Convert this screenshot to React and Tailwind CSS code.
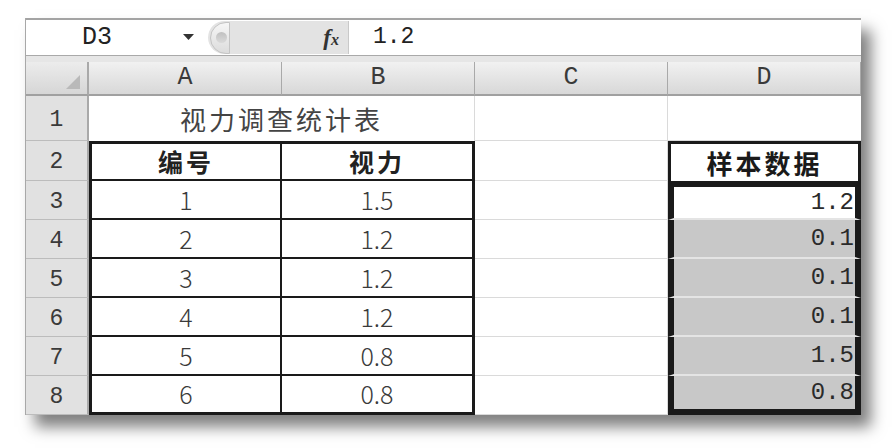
import React from 'react';

const mono = "font-['Liberation_Mono','Noto_Sans_CJK_SC',monospace]";
const cjk = "font-['Noto_Sans_CJK_SC','Noto_Sans',sans-serif]";

const rows = [
  { n: 3, a: '1', b: '1.5', d: '1.2' },
  { n: 4, a: '2', b: '1.2', d: '0.1' },
  { n: 5, a: '3', b: '1.2', d: '0.1' },
  { n: 6, a: '4', b: '1.2', d: '0.1' },
  { n: 7, a: '5', b: '0.8', d: '1.5' },
  { n: 8, a: '6', b: '0.8', d: '0.8' },
];

function RowHead({ n }) {
  return (
    <div className={`flex items-center justify-center pt-[4px] bg-[#e1e1e1] border-r-2 border-r-[#a9a9a9] border-b border-b-[#bcbcbc] text-[23px] text-[#3a3a3a] ${mono}`}>
      {n}
    </div>
  );
}

function ColHead({ label }) {
  return (
    <div className={`flex items-center justify-center bg-gradient-to-b from-[#f1f1f1] to-[#d8d8d8] border-r border-r-[#a9a9a9] border-b-2 border-b-[#a0a0a0] text-[25px] text-[#3a3a3a] ${mono}`}>
      {label}
    </div>
  );
}

export default function App() {
  return (
    <div className="w-[892px] h-[448px] bg-white overflow-hidden pt-[18px] pl-[25px]">
      <div className="w-[836px] bg-white border-l border-[#a8a8a8] shadow-[10px_12px_14px_rgba(0,0,0,0.5)]">
        {/* Formula bar */}
        <div className="h-[37px] flex items-stretch border-t-2 border-[#a3a3a3] bg-white">
          <div className={`w-[155px] flex items-center pl-[56px] text-[25px] text-[#222] ${mono}`}>D3</div>
          <div className="flex items-center pl-[2px] pr-[14px]">
            <svg width="11" height="7" viewBox="0 0 11 7">
              <path d="M0 0 H11 L5.5 6 Z" fill="#333" />
            </svg>
          </div>
          <div className="w-[141px] flex items-center bg-[#e3e3e3] rounded-l-full border-r border-[#c9c9c9] my-[1px]">
            <div className="ml-[2px] w-[20px] h-[32px] rounded-l-full border border-[#c4c4c4] bg-gradient-to-b from-[#f6f6f6] to-[#dcdcdc] flex items-center justify-end pr-[2px]">
              <div className="w-[11px] h-[11px] rounded-full bg-gradient-to-b from-[#c0c0c0] to-[#dadada]" />
            </div>
            <span className="ml-auto mr-[9px] font-['Liberation_Serif',serif] italic font-bold text-[23px] leading-none text-[#333]">
              f<span className="text-[16px]">x</span>
            </span>
          </div>
          <div className={`flex items-center pl-[24px] text-[23px] text-[#222] ${mono}`}>1.2</div>
        </div>
        <div className="h-[7px] bg-[#e6e6e6] border-t border-[#a9a9a9]" />

        {/* Sheet grid */}
        <div className="grid grid-cols-[63px_193px_193px_193px_193px] grid-rows-[34px_45px_40px_39px_39px_39px_39px_39px_39px]">
          <div className="relative bg-gradient-to-b from-[#ececec] to-[#d6d6d6] border-r-2 border-r-[#a9a9a9] border-b-2 border-b-[#a0a0a0]">
            <svg className="absolute right-[7px] bottom-[5px]" width="14" height="14" viewBox="0 0 14 14">
              <path d="M14 0 V14 H0 Z" fill="#b9b9b9" />
            </svg>
          </div>
          <ColHead label="A" />
          <ColHead label="B" />
          <ColHead label="C" />
          <ColHead label="D" />

          {/* Row 1 */}
          <RowHead n={1} />
          <div className={`col-span-2 flex items-center justify-center text-[26px] tracking-[3px] text-[#444] border-r border-r-[#dadada] ${cjk}`}>
            视力调查统计表
          </div>
          <div className="border-r border-b border-[#dadada]" />
          <div className="border-b border-[#dadada]" />

          {/* Row 2 */}
          <RowHead n={2} />
          <div className={`flex items-center justify-center border-t-[3px] border-l-[3px] border-r-2 border-b-2 border-[#1a1a1a] text-[25px] font-bold tracking-[3px] text-[#222] ${cjk}`}>
            编号
          </div>
          <div className={`flex items-center justify-center border-t-[3px] border-r-[3px] border-b-2 border-[#1a1a1a] text-[25px] font-bold tracking-[3px] text-[#222] ${cjk}`}>
            视力
          </div>
          <div className="border-r border-b border-[#dadada]" />
          <div className={`flex items-center justify-center border-t-[3px] border-x-[3px] border-[#1a1a1a] text-[26px] font-bold tracking-[3px] text-[#1a1a1a] ${cjk}`}>
            样本数据
          </div>

          {rows.map((r, i) => {
            const last = i === rows.length - 1;
            const first = i === 0;
            return (
              <React.Fragment key={r.n}>
                <RowHead n={r.n} />
                <div className={`flex items-center justify-center border-l-[3px] border-r-2 border-[#1a1a1a] ${last ? 'border-b-[3px]' : 'border-b-2'} text-[25px] font-light text-[#3a3a3a] ${cjk}`}>
                  {r.a}
                </div>
                <div className={`flex items-center justify-center border-r-[3px] border-[#1a1a1a] ${last ? 'border-b-[3px]' : 'border-b-2'} text-[25px] font-light text-[#3a3a3a] ${cjk}`}>
                  {r.b}
                </div>
                <div className="border-r border-b border-[#dadada]" />
                <div className={`border-x-[6px] border-x-[#1a1a1a] ${first ? 'border-t-[6px] border-t-[#1a1a1a]' : ''} ${last ? 'border-b-[6px] border-b-[#1a1a1a]' : 'border-b-2 border-b-[#e4e4e4]'}`}>
                  <div className={`h-full flex items-center justify-end pr-[1px] text-[24px] text-[#2a2a2a] ${first ? 'bg-white' : 'bg-[#c8c8c8]'} ${mono}`}>
                    {r.d}
                  </div>
                </div>
              </React.Fragment>
            );
          })}
        </div>
      </div>
    </div>
  );
}
